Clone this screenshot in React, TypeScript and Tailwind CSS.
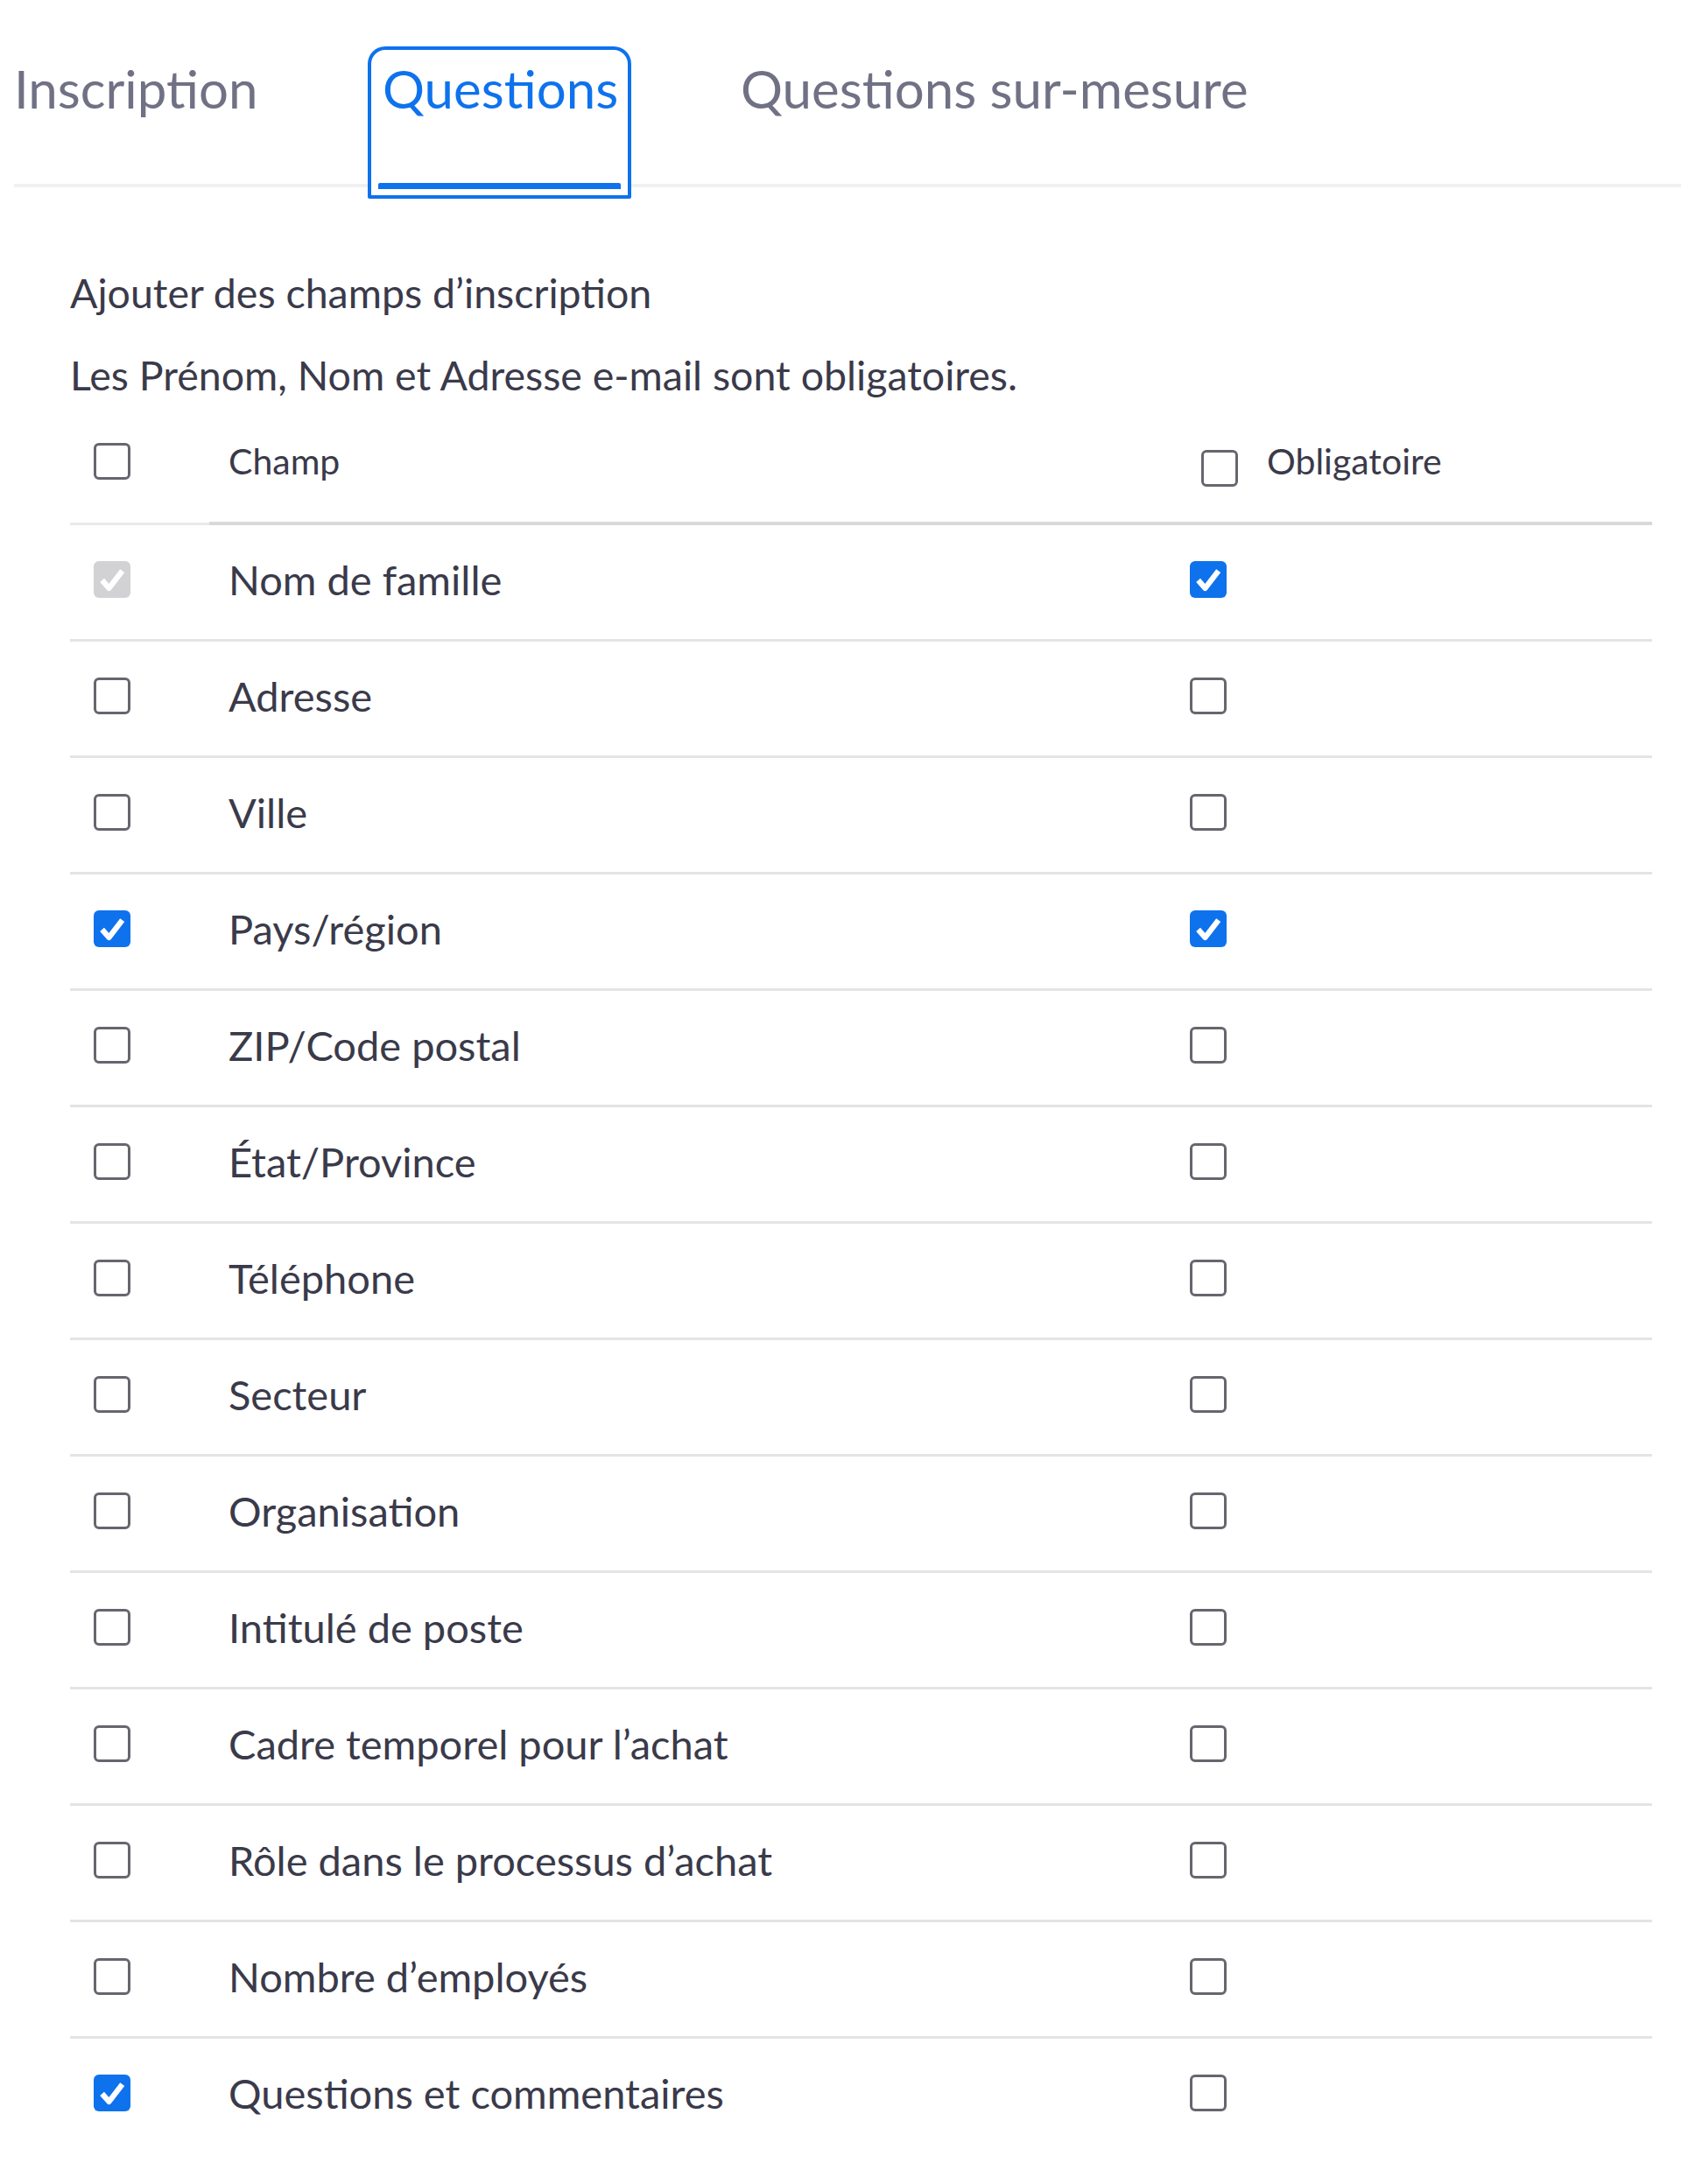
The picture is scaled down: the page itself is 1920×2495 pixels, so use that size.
import React from "react";

type CheckState = "off" | "on" | "locked";

const fields: { label: string; include: CheckState; required: CheckState }[] = [
   { label: "Nom de famille", include: "locked", required: "on" },
   { label: "Adresse", include: "off", required: "off" },
   { label: "Ville", include: "off", required: "off" },
   { label: "Pays/région", include: "on", required: "on" },
   { label: "ZIP/Code postal", include: "off", required: "off" },
   { label: "État/Province", include: "off", required: "off" },
   { label: "Téléphone", include: "off", required: "off" },
   { label: "Secteur", include: "off", required: "off" },
   { label: "Organisation", include: "off", required: "off" },
   { label: "Intitulé de poste", include: "off", required: "off" },
   { label: "Cadre temporel pour l’achat", include: "off", required: "off" },
   { label: "Rôle dans le processus d’achat", include: "off", required: "off" },
   { label: "Nombre d’employés", include: "off", required: "off" },
   { label: "Questions et commentaires", include: "on", required: "off" },
];

function Check({ state, className = "" }: { state: CheckState; className?: string }) {
   if (state === "off") {
      return <div className={`w-[42px] h-[42px] shrink-0 rounded-[6px] border-[3px] border-[#66666f] bg-white ${className}`} />;
   }
   return (
      <div
         className={`w-[42px] h-[42px] shrink-0 rounded-[6px] flex items-center justify-center ${
            state === "on" ? "bg-[#0e72ed]" : "bg-[#d2d2d4]"
         } ${className}`}
      >
         <svg viewBox="0 0 24 24" className="w-[38px] h-[38px]" fill="none">
            <path d="M4.8 12.6 L9.8 18.2 L19.4 5.8" stroke="white" strokeWidth="4" strokeLinejoin="round" />
         </svg>
      </div>
   );
}

export default function App() {
   return (
      <main className="w-[1920px] min-h-[2495px] bg-white font-['Lato','Liberation_Sans',sans-serif] text-[#3a3a4a]">
         {/* tabs */}
         <div className="ml-[16px] h-[214px] flex items-start border-b-4 border-[#f1f1f4]">
            <div className="w-[404px] pt-[65px] text-[60px] leading-[72px] text-[#707184]">Inscription</div>
            <div className="relative z-10 mt-[53px] w-[301px] h-[174px] bg-white border-4 border-[#0e72ed] rounded-t-[20px] rounded-b-[2px] px-[13px] pt-[8px] pb-[7px] flex flex-col">
               <span className="text-[60px] leading-[72px] text-[#0e72ed]">Questions</span>
               <div className="mt-auto -mx-[5px] h-[7px] bg-[#0e72ed] rounded-t-[2px]" />
            </div>
            <div className="ml-[125px] pt-[65px] text-[60px] leading-[72px] text-[#707184]">Questions sur-mesure</div>
         </div>

         {/* registration fields */}
         <div className="pl-[80px] pr-[33px]">
            <p className="mt-[73px] text-[46.5px] leading-[94px]">Ajouter des champs d’inscription</p>
            <p className="text-[46.5px] leading-[94px]">Les Prénom, Nom et Adresse e-mail sont obligatoires.</p>

            <div className="h-[121px] pb-[17px] flex items-center">
               <div className="w-[181px] pl-[27px]">
                  <Check state="off" />
               </div>
               <div className="w-[1098px] text-[41px]">Champ</div>
               <div className="flex items-center">
                  <Check state="off" className="ml-[13px] mt-[16px]" />
                  <span className="ml-[33px] text-[41px]">Obligatoire</span>
               </div>
            </div>
            <div className="flex items-start">
               <div className="w-[159px] h-[3px] mt-[1px] bg-[#e9e9ec]" />
               <div className="flex-1 h-[4px] bg-[#d9d9dc]" />
            </div>

            {fields.map((f, i) => (
               <div
                  key={f.label}
                  className={`h-[133px] flex items-center ${i < fields.length - 1 ? "border-b-[3px] border-[#e4e4e7] pb-[7px]" : "pb-[10px]"}`}
               >
                  <div className="w-[181px] pl-[27px]">
                     <Check state={f.include} />
                  </div>
                  <div className="w-[1098px] text-[47px] leading-[60px]">{f.label}</div>
                  <Check state={f.required} />
               </div>
            ))}
         </div>
      </main>
   );
}
